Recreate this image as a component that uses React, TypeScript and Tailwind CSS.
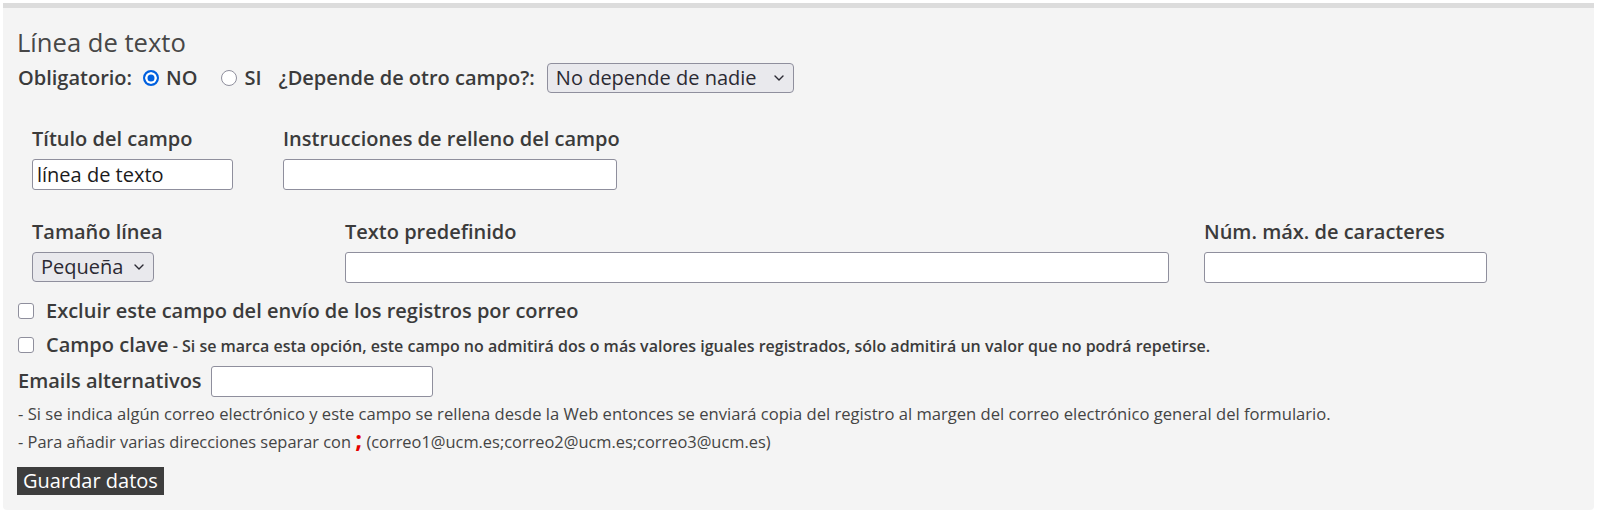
import React from "react";

function Chevron() {
  return (
    <svg width="10" height="6" viewBox="0 0 10 6" className="pointer-events-none absolute right-[10px] top-1/2 -translate-y-1/2" aria-hidden="true">
      <path d="M1 1 L5 5 L9 1" fill="none" stroke="#2b2a33" strokeWidth="1.4" strokeLinecap="round" strokeLinejoin="round" />
    </svg>
  );
}

function Select({ value, width }: { value: string; width: string }) {
  return (
    <div className={`relative ${width} h-[30px]`}>
      <select
        defaultValue={value}
        className="appearance-none w-full h-full rounded-[4px] border border-[#8f8f9d] bg-[#e9e9ed] pl-[8px] pr-[26px] text-[20px] font-normal leading-[28px] text-[#2b2a33] font-['Open_Sans',sans-serif]"
      >
        <option>{value}</option>
      </select>
      <Chevron />
    </div>
  );
}

function TextInput({ width, value = "" }: { width: string; value?: string }) {
  return (
    <input
      type="text"
      defaultValue={value}
      className={`${width} h-[31px] rounded-[3px] border border-[#8f8f9d] bg-white px-[4px] text-[20px] font-normal text-[#1b1b1b] font-['Open_Sans',sans-serif] outline-none`}
    />
  );
}

function Radio({ checked }: { checked?: boolean }) {
  return (
    <input
      type="radio"
      name="obligatorio"
      defaultChecked={checked}
      className={
        checked
          ? "appearance-none w-4 h-4 rounded-full border-2 border-[#0060df] bg-[#0060df] shadow-[inset_0_0_0_2.5px_white] shrink-0"
          : "appearance-none w-4 h-4 rounded-full border-[1.5px] border-[#8f8f9d] bg-white shrink-0"
      }
    />
  );
}

function Checkbox() {
  return (
    <input
      type="checkbox"
      className="appearance-none w-4 h-4 rounded-[3px] border-[1.5px] border-[#8f8f9d] bg-white shrink-0"
    />
  );
}

export default function App() {
  return (
    <div className="bg-white pt-[3px] px-[3px] pb-[6px] font-['Open_Sans',sans-serif] text-[#3b3b3b]">
      <div className="border-t-[5px] border-[#dcdcdc] bg-[#f4f4f4] rounded-b-[4px] pl-[14px] pt-[19px] pb-[15px]">
        <h2 className="h-[32px] leading-[32px] text-[25.6px] font-normal text-[#474747]">Línea de texto</h2>

        <div className="mt-[3px] flex items-center h-[32px] text-[20px] font-semibold">
          <span className="ml-[1px]">Obligatorio:</span>
          <span className="ml-[11px] flex items-center">
            <Radio checked />
          </span>
          <span className="ml-[7px]">NO</span>
          <span className="ml-[24px] flex items-center">
            <Radio />
          </span>
          <span className="ml-[7px]">SI</span>
          <span className="ml-[17px]">¿Depende de otro campo?:</span>
          <span className="ml-[12px]">
            <Select value="No depende de nadie" width="w-[247px]" />
          </span>
        </div>

        <div className="mt-[31px] ml-[15px] flex">
          <div className="w-[251px] flex flex-col">
            <label className="h-[28px] leading-[28px] text-[20px] font-semibold">Título del campo</label>
            <div className="mt-[6px]">
              <TextInput width="w-[201px]" value="línea de texto" />
            </div>
          </div>
          <div className="flex flex-col">
            <label className="h-[28px] leading-[28px] text-[20px] font-semibold">Instrucciones de relleno del campo</label>
            <div className="mt-[6px]">
              <TextInput width="w-[334px]" />
            </div>
          </div>
        </div>

        <div className="mt-[28px] ml-[15px] flex">
          <div className="w-[313px] flex flex-col">
            <label className="h-[28px] leading-[28px] text-[20px] font-semibold">Tamaño línea</label>
            <div className="mt-[6px]">
              <Select value="Pequeña" width="w-[122px]" />
            </div>
          </div>
          <div className="w-[859px] flex flex-col">
            <label className="h-[28px] leading-[28px] text-[20px] font-semibold">Texto predefinido</label>
            <div className="mt-[6px]">
              <TextInput width="w-[824px]" />
            </div>
          </div>
          <div className="flex flex-col">
            <label className="h-[28px] leading-[28px] text-[20px] font-semibold">Núm. máx. de caracteres</label>
            <div className="mt-[6px]">
              <TextInput width="w-[283px]" />
            </div>
          </div>
        </div>

        <label className="mt-[14px] ml-[1px] flex items-center h-[28px]">
          <Checkbox />
          <span className="ml-[12px] text-[20px] font-semibold leading-[28px]">Excluir este campo del envío de los registros por correo</span>
        </label>

        <label className="mt-[6px] ml-[1px] flex items-center h-[28px]">
          <Checkbox />
          <span className="ml-[12px] leading-[28px] font-semibold whitespace-nowrap">
            <span className="text-[20px]">Campo clave</span>
            <span className="text-[16px]"> - Si se marca esta opción, este campo no admitirá dos o más valores iguales registrados, sólo admitirá un valor que no podrá repetirse.</span>
          </span>
        </label>

        <div className="mt-[6px] ml-[1px] flex items-center h-[32px]">
          <span className="text-[20px] font-semibold">Emails alternativos</span>
          <span className="ml-[9px]">
            <TextInput width="w-[222px]" />
          </span>
        </div>

        <p className="mt-[5px] ml-[1px] h-[24px] leading-[24px] text-[16.6px] text-[#444] whitespace-nowrap">
          - Si se indica algún correo electrónico y este campo se rellena desde la Web entonces se enviará copia del registro al margen del correo electrónico general del formulario.
        </p>
        <p className="mt-[1px] ml-[1px] h-[24px] leading-[24px] text-[16.4px] text-[#444] whitespace-nowrap">
          - Para añadir varias direcciones separar con{" "}
          <span className="text-[24px] font-bold text-[#e60000] leading-[24px]">;</span>{" "}
          (correo1@ucm.es;correo2@ucm.es;correo3@ucm.es)
        </p>

        <button
          type="button"
          className="mt-[16px] block h-[28px] bg-[#3d3d3d] px-[6px] text-[20px] leading-[28px] text-white font-['Open_Sans',sans-serif]"
        >
          Guardar datos
        </button>
      </div>
    </div>
  );
}
